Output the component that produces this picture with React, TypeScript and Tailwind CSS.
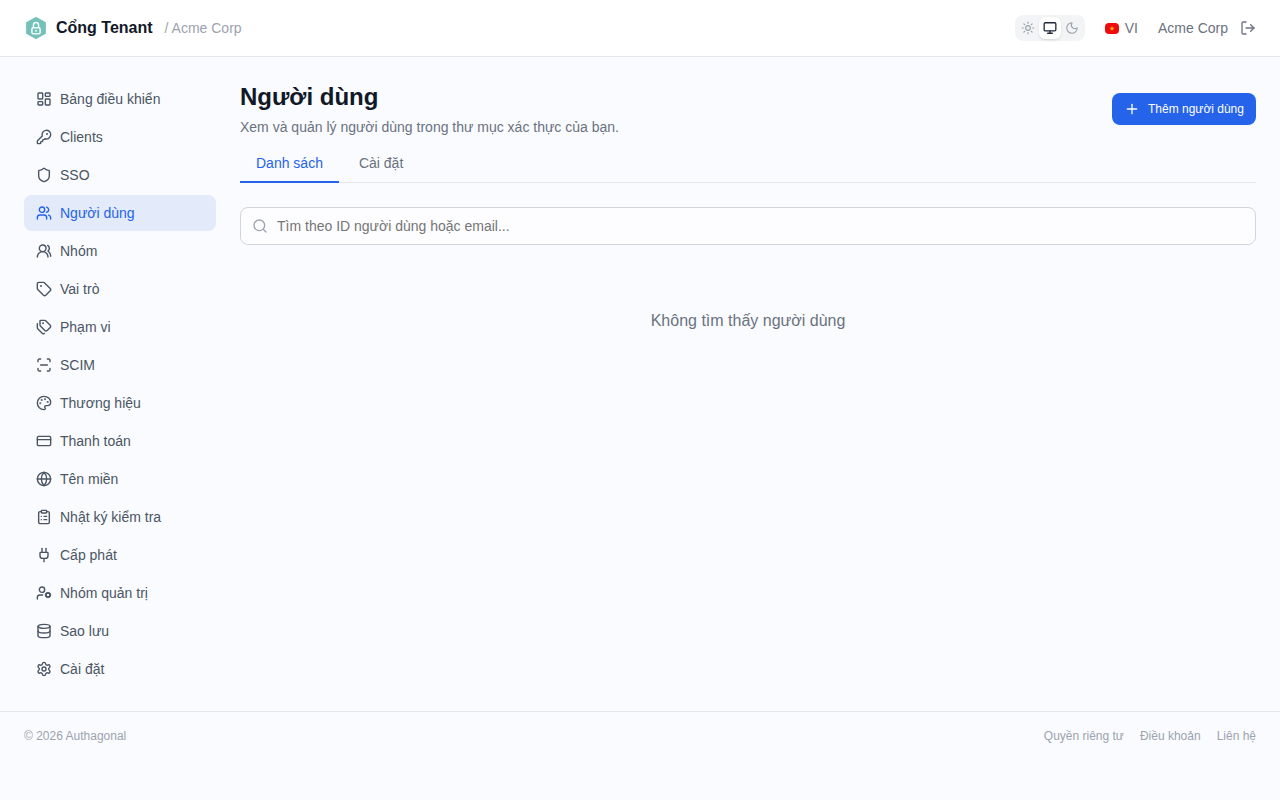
import {
  LayoutDashboard, KeyRound, Shield, Users, UsersRound, Tag, Tags, ScanLine, Palette, CreditCard, Globe,
  ClipboardList, Plug, UserCog, Database, Settings, LogOut, Sun, Monitor, Moon, Search, Plus,
} from "lucide-react";

const nav = [
  { label: "Bảng điều khiển", Icon: LayoutDashboard },
  { label: "Clients", Icon: KeyRound },
  { label: "SSO", Icon: Shield },
  { label: "Người dùng", Icon: Users, active: true },
  { label: "Nhóm", Icon: UsersRound },
  { label: "Vai trò", Icon: Tag },
  { label: "Phạm vi", Icon: Tags },
  { label: "SCIM", Icon: ScanLine },
  { label: "Thương hiệu", Icon: Palette },
  { label: "Thanh toán", Icon: CreditCard },
  { label: "Tên miền", Icon: Globe },
  { label: "Nhật ký kiểm tra", Icon: ClipboardList },
  { label: "Cấp phát", Icon: Plug },
  { label: "Nhóm quản trị", Icon: UserCog },
  { label: "Sao lưu", Icon: Database },
  { label: "Cài đặt", Icon: Settings },
];

function Logo() {
  return (
    <svg width="22" height="24" viewBox="0 0 22 24" className="shrink-0">
      <path d="M12 1.2 L21.6 6.6 V17.4 L12 22.8 L2.4 17.4 V6.6 Z" fill="#74c2b7" stroke="#74c2b7" strokeWidth="0.8" strokeLinejoin="round" />
      <rect x="7.9" y="11.8" width="8.2" height="6" rx="1.3" fill="none" stroke="#f2fbf9" strokeWidth="1.5" />
      <path d="M9.4 11.8 V9.2 a2.6 2.6 0 0 1 5.2 0 V11.8" fill="none" stroke="#f2fbf9" strokeWidth="1.5" />
      <circle cx="12" cy="14.8" r="1" fill="#f2fbf9" />
    </svg>
  );
}

function Flag() {
  return (
    <svg width="14" height="11" viewBox="0 0 14 11" className="shrink-0">
      <rect width="14" height="11" rx="4" fill="#ef0b0b" />
      <path d="M7 3 L7.6 4.8 H9.5 L8 5.9 L8.6 7.7 L7 6.6 L5.4 7.7 L6 5.9 L4.5 4.8 H6.4 Z" fill="#f7c51e" />
    </svg>
  );
}

export default function App() {
  return (
    <div className="min-h-[800px] bg-[#f9fbfe] font-['Liberation_Sans',Arial,sans-serif] flex flex-col">
      <header className="h-[57px] bg-white border-b border-[#e5e7eb] px-6 flex items-center justify-between">
        <div className="flex items-center">
          <Logo />
          <span className="ml-[10px] text-base font-bold text-[#111827]">Cổng Tenant</span>
          <span className="ml-3 text-sm text-[#9ca3af]">/ Acme Corp</span>
        </div>
        <div className="flex items-center">
          <div className="flex items-center bg-[#f3f4f6] rounded-lg p-[2px] h-[26px]">
            <span className="w-[22px] h-[22px] flex items-center justify-center text-[#9ca3af]"><Sun size={14} /></span>
            <span className="w-[22px] h-[22px] flex items-center justify-center bg-white rounded-md text-[#1f2937] shadow-sm"><Monitor size={14} strokeWidth={2.25} /></span>
            <span className="w-[22px] h-[22px] flex items-center justify-center text-[#9ca3af]"><Moon size={14} /></span>
          </div>
          <div className="ml-5 flex items-center gap-[6px] text-sm text-[#6b7280]"><Flag /><span>VI</span></div>
          <span className="ml-5 text-sm text-[#6b7280]">Acme Corp</span>
          <LogOut size={16} className="ml-3 text-[#6b7280]" />
        </div>
      </header>

      <div className="flex gap-6 p-6 flex-1">
        <nav className="w-48 shrink-0 flex flex-col gap-[2px]">
          {nav.map(({ label, Icon, active }) => (
            <div
              key={label}
              className={
                active
                  ? "h-9 px-3 flex items-center gap-2 rounded-lg text-sm bg-[#e3eafa] text-[#2563eb]"
                  : "h-9 px-3 flex items-center gap-2 rounded-lg text-sm text-[#4b5563]"
              }
            >
              <Icon size={16} strokeWidth={2.1} className="shrink-0" />
              <span>{label}</span>
            </div>
          ))}
        </nav>

        <main className="flex-1 min-w-0">
          <div className="flex items-start justify-between">
            <div>
              <h1 className="text-2xl font-bold text-[#111827]">Người dùng</h1>
              <p className="mt-1 text-sm text-[#6b7280]">Xem và quản lý người dùng trong thư mục xác thực của bạn.</p>
            </div>
            <button className="mt-3 h-8 w-36 rounded-lg bg-[#2563eb] text-white text-xs flex items-center justify-center gap-2">
              <Plus size={16} />
              <span>Thêm người dùng</span>
            </button>
          </div>

          <div className="mt-2 flex border-b border-[#e5e7eb] h-[38px]">
            <div className="px-4 h-[38px] flex items-center text-sm text-[#2563eb] border-b-2 border-[#2563eb]">Danh sách</div>
            <div className="ml-1 px-4 h-[38px] flex items-center text-sm text-[#6b7280] border-b-2 border-transparent">Cài đặt</div>
          </div>

          <div className="mt-6 h-[38px] rounded-lg border border-[#d1d5db] bg-white/60 flex items-center pl-[11px] pr-3 gap-[9px]">
            <Search size={16} className="text-[#9ca3af] shrink-0" />
            <span className="text-sm text-[#757575]">Tìm theo ID người dùng hoặc email...</span>
          </div>

          <p className="mt-16 text-center text-base text-[#6b7280]">Không tìm thấy người dùng</p>
        </main>
      </div>

      <footer className="h-[89px] border-t border-[#e5e7eb] px-6 pt-4 flex justify-between text-xs text-[#9ca3af]">
        <span>© 2026 Authagonal</span>
        <div className="flex gap-4">
          <span>Quyền riêng tư</span>
          <span>Điều khoản</span>
          <span>Liên hệ</span>
        </div>
      </footer>
    </div>
  );
}
